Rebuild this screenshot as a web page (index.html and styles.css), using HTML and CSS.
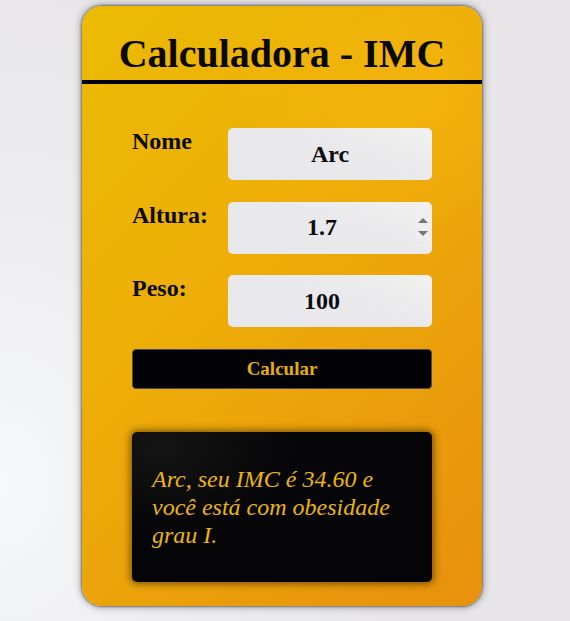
FILE: index.html
```html
<!DOCTYPE html>
<html lang="pt">
<head>
<meta charset="utf-8">
<title>Calculadora - IMC</title>
<link rel="stylesheet" href="styles.css">
</head>
<body>
<div class="page">
  <main class="card">
    <h1 class="title">Calculadora - IMC</h1>
    <form class="form">
      <div class="fields">
        <label class="label" for="nome">Nome</label>
        <div class="field"><input class="input" id="nome" type="text" value="Arc"></div>
        <label class="label" for="altura">Altura:</label>
        <div class="field">
          <input class="input input-num" id="altura" type="text" value="1.7">
          <span class="spinner"><span class="arrow-up"></span><span class="arrow-down"></span></span>
        </div>
        <label class="label" for="peso">Peso:</label>
        <div class="field"><input class="input input-num" id="peso" type="text" value="100"></div>
      </div>
      <button class="btn" type="button">Calcular</button>
    </form>
    <div class="result">
      <p class="result-text">Arc, seu IMC é 34.60 e você está com obesidade grau I.</p>
    </div>
  </main>
</div>
</body>
</html>
```

FILE: styles.css
```css
* { box-sizing: border-box; }

html, body {
  margin: 0;
  padding: 0;
  height: 100%;
}

body {
  font-family: "Liberation Serif", "Times New Roman", serif;
  background: radial-gradient(ellipse 420px 520px at 0% 78%, #f7f8fa 0%, #eeeef1 45%, #e7e5e8 100%);
}

.page {
  display: flex;
  justify-content: center;
  padding: 6px 6px 0 0;
}

.card {
  width: 400px;
  height: 600px;
  border-radius: 20px;
  background:
    radial-gradient(ellipse 200px 140px at 85% 16%, rgba(250, 190, 20, 0.35), rgba(250, 190, 20, 0) 100%),
    linear-gradient(135deg, #ebbb02 0%, #eeae08 40%, #ea9f0b 70%, #e8900c 100%);
  box-shadow: 0 0 2px 1px rgba(90, 90, 100, 0.7), 0 0 7px 2px rgba(0, 0, 0, 0.28);
  display: flex;
  flex-direction: column;
}

.title {
  margin: 25px 0 0;
  padding-bottom: 3px;
  border-bottom: 4px solid #000;
  text-align: center;
  font-size: 40px;
  font-weight: bold;
  color: #0a0907;
  line-height: 46px;
}

.form {
  margin: 44px 50px 0;
  display: flex;
  flex-direction: column;
}

.fields {
  display: grid;
  grid-template-columns: 96px 204px;
  row-gap: 21.5px;
  align-items: start;
}

.label {
  font-size: 24px;
  font-weight: bold;
  color: #0b0a06;
  line-height: 27px;
}

.field {
  position: relative;
  height: 52px;
}

.input {
  display: block;
  width: 204px;
  height: 52px;
  border: none;
  border-radius: 5px;
  padding: 0;
  background: linear-gradient(200deg, #f1f1ef 0%, #e9e8eb 45%, #e8e7eb 100%);
  font-family: "Liberation Serif", "Times New Roman", serif;
  font-size: 24px;
  font-weight: bold;
  color: #0c0c10;
  text-align: center;
  outline: none;
}

.input-num {
  padding-right: 16px;
}

.spinner {
  position: absolute;
  top: 11px;
  right: 3px;
  width: 13px;
  height: 28px;
  background: #eeeef0;
  display: flex;
  flex-direction: column;
  align-items: center;
  justify-content: center;
  gap: 8px;
}

.arrow-up {
  width: 0;
  height: 0;
  border-left: 5px solid transparent;
  border-right: 5px solid transparent;
  border-bottom: 5px solid #757578;
}

.arrow-down {
  width: 0;
  height: 0;
  border-left: 5px solid transparent;
  border-right: 5px solid transparent;
  border-top: 5px solid #757578;
}

.btn {
  margin-top: 22px;
  width: 300px;
  height: 40px;
  border: 1.5px solid #4c4b4e;
  border-radius: 4px;
  background: #030307;
  color: #e6ad0f;
  font-family: "Liberation Serif", "Times New Roman", serif;
  font-size: 19px;
  font-weight: bold;
  padding: 0;
  cursor: pointer;
}

.result {
  margin: 43px 50px 0;
  height: 150px;
  border-radius: 5px;
  background: radial-gradient(ellipse 220px 140px at 10% 10%, #141414 0%, #060608 60%, #050507 100%);
  box-shadow: 0 0 7px 2px rgba(40, 25, 0, 0.55);
  display: flex;
  align-items: center;
  padding: 0 20px;
}

.result-text {
  margin: 0;
  font-size: 24px;
  font-style: italic;
  color: #ecb412;
  line-height: 28px;
}
```
